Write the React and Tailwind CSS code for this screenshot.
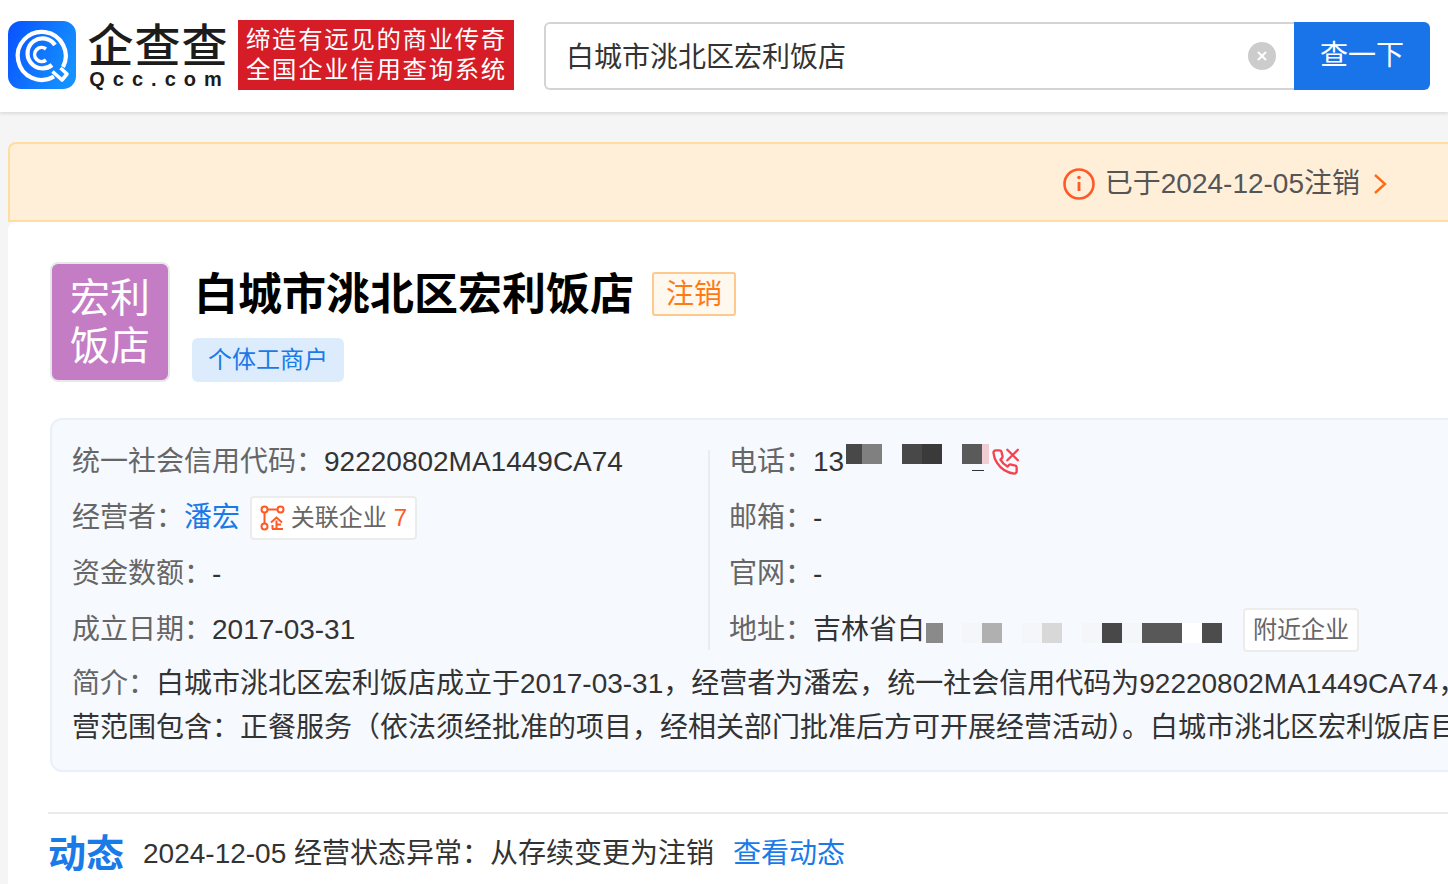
import React from "react";

const FONT = { fontFamily: '"Liberation Sans", "Noto Sans CJK SC", sans-serif' };

const inView = (x, y) => x > 0 && x < 1448 && y > 0 && y < 884;
const MARKS = [];
for (let j = -7; j <= 7; j++) {
  for (let i = -6; i <= 6; i++) {
    const left = 320 * i - 41 * j;
    const top = 172 * j - 30;
    const sx = 1221 + left * 0.629 + (top + 30) * 0.777;
    const sy = 431 - left * 0.777 + (top + 30) * 0.629;
    const ex = sx + 236 * 0.629;
    const ey = sy - 236 * 0.777;
    if (inView(sx, sy) && inView(ex, ey)) MARKS.push({ key: `${i}:${j}`, left, top });
  }
}

function Watermark() {
  return (
    <div aria-hidden="true" className="pointer-events-none absolute top-[431px] left-[1221px] origin-top-left rotate-[-51deg]">
      {MARKS.map((m) => (
        <span
          key={m.key}
          style={{ left: m.left, top: m.top }}
          className="absolute text-[28px] leading-[32px] font-bold tracking-[15px] whitespace-nowrap text-[#00000005]"
        >
          88MBP9G
        </span>
      ))}
    </div>
  );
}

function Logo() {
  return (
    <svg width="68" height="68" viewBox="0 0 68 68" className="-mt-[2px] shrink-0">
      <defs>
        <linearGradient id="lg" x1="0" y1="0.2" x2="1" y2="0.6">
          <stop offset="0" stopColor="#0a55ff" />
          <stop offset="1" stopColor="#1592ff" />
        </linearGradient>
      </defs>
      <rect width="68" height="68" rx="13" fill="url(#lg)" />
      <g fill="none" stroke="#fff" strokeWidth="4.2">
        <path d="M46 55.5 A 24 24 0 1 1 55 46" />
        <path d="M44.5 50.5 L54 59 L59 53 L52.5 47" strokeLinejoin="round" strokeWidth="3.6" />
        <path d="M44 44 A 15 15 0 1 1 47 24" />
        <path d="M38 39 A 7 7 0 1 1 38 28" strokeWidth="3.6" />
      </g>
    </svg>
  );
}

function RelIcon() {
  return (
    <svg width="26" height="26" viewBox="0 0 26 26" fill="none" stroke="#ff5a26" strokeWidth="2" className="shrink-0">
      <circle cx="4.5" cy="4.5" r="3" />
      <circle cx="20.5" cy="4.5" r="3" />
      <circle cx="4.5" cy="21.5" r="3" />
      <path d="M7.5 4.5H17.5M4.5 7.5V18.5" />
      <path d="M11 17.5L16.5 12.5L22 17.5" />
      <path d="M16.5 15.5V24M16.5 19.5H21M12 24H23M12.5 20V24" />
    </svg>
  );
}

function PhoneOffIcon() {
  return (
    <svg width="28" height="28" viewBox="0 0 24 24" fill="none" stroke="#f5424d" strokeWidth="2" strokeLinecap="round" strokeLinejoin="round" className="ml-[147px] shrink-0">
      <path d="M14 1.5L23 10.5M23 1.5L14 10.5" />
      <path d="M22 16.92v3a2 2 0 0 1-2.18 2 19.79 19.79 0 0 1-8.63-3.07 19.5 19.5 0 0 1-6-6 19.79 19.79 0 0 1-3.07-8.67A2 2 0 0 1 4.11 2h3a2 2 0 0 1 2 1.72 12.84 12.84 0 0 0 .7 2.81 2 2 0 0 1-.45 2.11L8.09 9.91a16 16 0 0 0 6 6l1.27-1.27a2 2 0 0 1 2.11-.45 12.84 12.84 0 0 0 2.81.7A2 2 0 0 1 22 16.92z" />
    </svg>
  );
}

function Label({ children }) {
  return <span className="text-[#666666]">{children}</span>;
}

function Row({ children }) {
  return <div className="flex h-14 items-center whitespace-nowrap">{children}</div>;
}

export default function App() {
  return (
    <div style={FONT} className="relative h-[884px] w-[1448px] overflow-hidden bg-[#f5f5f5]">
      <header className="flex h-[112px] items-center bg-white pl-2 shadow-[0_2px_3px_rgba(0,0,0,0.1)]">
        <Logo />
        <div className="ml-3 flex w-[140px] flex-col items-center text-[#1c1c1c]">
          <div className="text-[46px] leading-[46px] font-medium tracking-[1px] whitespace-nowrap">企查查</div>
          <div className="pl-[3px] text-[20px] leading-[20px] font-bold tracking-[8px] whitespace-nowrap">Qcc.com</div>
        </div>
        <div className="-mt-[2px] ml-[10px] flex h-[70px] w-[276px] flex-col items-center justify-center bg-[#d51c27] pl-[1px] text-[24.4px] leading-[30px] tracking-[1.7px] whitespace-nowrap text-white">
          <div>缔造有远见的商业传奇</div>
          <div>全国企业信用查询系统</div>
        </div>
        <div className="ml-[30px] flex h-[68px] w-[750px] items-center rounded-l-md border-2 border-r-0 border-[#d4d4d4] bg-white pr-[18px] pl-5">
          <span className="flex-1 pt-1 text-[28px] text-[#333333]">白城市洮北区宏利饭店</span>
          <span className="flex h-7 w-7 items-center justify-center rounded-full bg-[#cccccc]">
            <svg width="12" height="12" viewBox="0 0 12 12" stroke="#fff" strokeWidth="2">
              <path d="M2 2L10 10M10 2L2 10" />
            </svg>
          </span>
        </div>
        <button className="flex h-[68px] w-[136px] items-center justify-center rounded-r-md bg-[#1874e8] text-[28px] text-white">查一下</button>
      </header>

      <main className="mt-[30px] ml-2 w-[1460px]">
        <div className="flex h-[80px] items-center justify-end rounded-tl-lg border-y-2 border-l-2 border-[#fedd9e] bg-[#ffefd8] pt-1 pr-[81px]">
          <svg width="34" height="34" viewBox="0 0 34 34" fill="none" className="shrink-0">
            <circle cx="18" cy="17" r="14.5" stroke="#ff5a26" strokeWidth="2.6" />
            <circle cx="18" cy="10.5" r="1.8" fill="#ff5a26" />
            <path d="M18 15V24" stroke="#ff5a26" strokeWidth="2.8" />
          </svg>
          <span className="ml-[10px] text-[28px] text-[#555555]">已于2024-12-05注销</span>
          <svg width="14" height="22" viewBox="0 0 14 22" fill="none" stroke="#ff6a14" strokeWidth="2.4" className="ml-[13px]">
            <path d="M2 2L12 11L2 20" />
          </svg>
        </div>

        <section className="rounded-t-lg bg-white pt-10 pl-[42px]">
          <div className="flex">
            <div className="flex h-[120px] w-[120px] items-center justify-center rounded-lg border-2 border-[#e8e8e8] bg-[#c47dc5] text-center text-[40px] leading-[48px] text-white">
              宏利<br />饭店
            </div>
            <div className="ml-[22px]">
              <div className="flex h-[64px] items-center pl-[2px]">
                <h1 className="pt-[1px] text-[44px] leading-[64px] font-bold whitespace-nowrap text-black">白城市洮北区宏利饭店</h1>
                <span className="ml-[18px] flex h-[44px] w-[84px] items-center justify-center rounded-[3px] border-2 border-[#fdc98c] bg-[#fff8ef] pt-[1px] text-[28px] text-[#ff7a14]">注销</span>
              </div>
              <div className="mt-3 flex h-[44px] w-[152px] items-center justify-center rounded-md bg-[#dcecfd] text-[24px] text-[#1a7ae8]">个体工商户</div>
            </div>
          </div>

          <div className="mt-9 h-[354px] w-[1450px] rounded-xl border-2 border-[#e9f0f9] bg-[#f6f9fe] pt-[14px] pl-5 text-[28px] text-[#333333]">
            <div className="flex">
              <div className="w-[636px] shrink-0">
                <Row>
                  <Label>统一社会信用代码：</Label>
                  <span>92220802MA1449CA74</span>
                </Row>
                <Row>
                  <Label>经营者：</Label>
                  <span className="text-[#1a7ae8]">潘宏</span>
                  <span className="ml-[10px] flex h-[44px] w-[167px] items-center justify-center rounded border-2 border-[#ececec] bg-white text-[24px] text-[#666666]">
                    <RelIcon />
                    <span className="ml-[5px]">关联企业</span>
                    <span className="ml-[7px] text-[#ff5a26]">7</span>
                  </span>
                </Row>
                <Row>
                  <Label>资金数额：</Label>
                  <span>-</span>
                </Row>
                <Row>
                  <Label>成立日期：</Label>
                  <span>2017-03-31</span>
                </Row>
              </div>
              <div className="mt-4 h-[200px] w-[2px] shrink-0 bg-[#ececec]" />
              <div className="ml-[19px]">
                <Row>
                  <Label>电话：</Label>
                  <span className="relative">
                    <span>13</span>
                    <span className="absolute top-[3px] left-[33px] flex h-5">
                      <span className="h-5 w-4 bg-[#484848]" />
                      <span className="h-5 w-5 bg-[#808080]" />
                      <span className="ml-5 h-5 w-5 bg-[#484848]" />
                      <span className="h-5 w-5 bg-[#3a3a3a]" />
                      <span className="ml-5 h-5 w-5 bg-[#5a5a5a]" />
                      <span className="h-5 w-[7px] bg-[#f0cdd3]" />
                    </span>
                    <span className="absolute top-[29px] left-[159px] h-[1px] w-[12px] bg-[#333333]" />
                  </span>
                  <PhoneOffIcon />
                </Row>
                <Row>
                  <Label>邮箱：</Label>
                  <span>-</span>
                </Row>
                <Row>
                  <Label>官网：</Label>
                  <span>-</span>
                </Row>
                <Row>
                  <Label>地址：</Label>
                  <span className="relative">
                    <span>吉林省白</span>
                    <span className="absolute top-[14px] left-[113px] flex h-5 items-stretch">
                      <span className="w-[17px] bg-[#8a8a8a]" />
                      <span className="ml-[19px] w-5 bg-[#f4f6f9]" />
                      <span className="w-5 bg-[#b0b0b0]" />
                      <span className="ml-5 w-5 bg-[#f4f6f9]" />
                      <span className="w-5 bg-[#d8d8d8]" />
                      <span className="ml-5 w-5 bg-[#f4f6f9]" />
                      <span className="w-5 bg-[#484848]" />
                      <span className="w-5 bg-[#f4f6f9]" />
                      <span className="w-10 bg-[#585858]" />
                      <span className="w-5 bg-white" />
                      <span className="w-5 bg-[#4c4c4c]" />
                    </span>
                  </span>
                  <span className="ml-[318px] flex h-[44px] w-[116px] items-center justify-center rounded border-2 border-[#ececec] bg-white text-[24px] text-[#666666]">附近企业</span>
                </Row>
              </div>
            </div>
            <div className="mt-1 text-[28px] leading-[44px] whitespace-nowrap">
              <div><Label>简介：</Label>白城市洮北区宏利饭店成立于2017-03-31，经营者为潘宏，统一社会信用代码为92220802MA1449CA74，</div>
              <div>营范围包含：正餐服务（依法须经批准的项目，经相关部门批准后方可开展经营活动）。白城市洮北区宏利饭店目前的经营状态</div>
            </div>
          </div>

          <div className="mt-10 -ml-[2px] flex h-[72px] items-center border-t-2 border-[#ebebeb] pt-[10px] text-[28px] whitespace-nowrap">
            <span className="text-[38px] font-bold text-[#1a7ae8]">动态</span>
            <span className="ml-[19px] text-[#333333]">2024-12-05 经营状态异常：从存续变更为注销</span>
            <span className="ml-[19px] text-[#1a7ae8]">查看动态</span>
          </div>
        </section>
      </main>
      <Watermark />
    </div>
  );
}
